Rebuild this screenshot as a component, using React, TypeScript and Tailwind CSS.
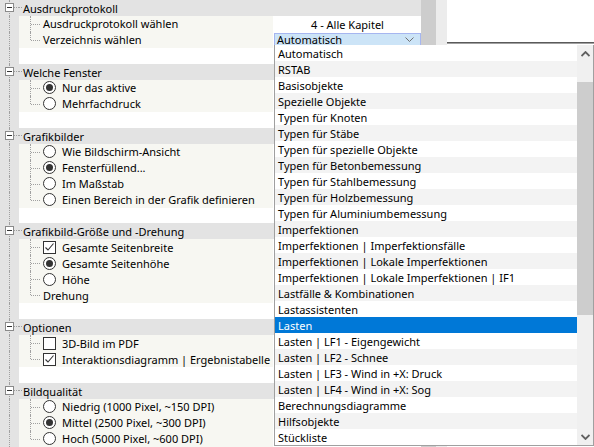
import React from 'react';

type Icon = 'radio-on' | 'radio-off' | 'check-on' | 'check-off';

type Row =
  | { kind: 'header'; label: string }
  | { kind: 'item'; label: string; icon?: Icon; last?: boolean; value?: 'text' | 'combo' }
  | { kind: 'empty' };

const rows: Row[] = [
  { kind: 'header', label: 'Ausdruckprotokoll' },
  { kind: 'item', label: 'Ausdruckprotokoll wählen', value: 'text' },
  { kind: 'item', label: 'Verzeichnis wählen', value: 'combo', last: true },
  { kind: 'empty' },
  { kind: 'header', label: 'Welche Fenster' },
  { kind: 'item', label: 'Nur das aktive', icon: 'radio-on' },
  { kind: 'item', label: 'Mehrfachdruck', icon: 'radio-off', last: true },
  { kind: 'empty' },
  { kind: 'header', label: 'Grafikbilder' },
  { kind: 'item', label: 'Wie Bildschirm-Ansicht', icon: 'radio-off' },
  { kind: 'item', label: 'Fensterfüllend...', icon: 'radio-on' },
  { kind: 'item', label: 'Im Maßstab', icon: 'radio-off' },
  { kind: 'item', label: 'Einen Bereich in der Grafik definieren', icon: 'radio-off', last: true },
  { kind: 'empty' },
  { kind: 'header', label: 'Grafikbild-Größe und -Drehung' },
  { kind: 'item', label: 'Gesamte Seitenbreite', icon: 'check-on' },
  { kind: 'item', label: 'Gesamte Seitenhöhe', icon: 'radio-on' },
  { kind: 'item', label: 'Höhe', icon: 'radio-off' },
  { kind: 'item', label: 'Drehung', last: true },
  { kind: 'empty' },
  { kind: 'header', label: 'Optionen' },
  { kind: 'item', label: '3D-Bild im PDF', icon: 'check-off' },
  { kind: 'item', label: 'Interaktionsdiagramm | Ergebnistabelle', icon: 'check-on', last: true },
  { kind: 'empty' },
  { kind: 'header', label: 'Bildqualität' },
  { kind: 'item', label: 'Niedrig (1000 Pixel, ~150 DPI)', icon: 'radio-off' },
  { kind: 'item', label: 'Mittel (2500 Pixel, ~300 DPI)', icon: 'radio-on' },
  { kind: 'item', label: 'Hoch (5000 Pixel, ~600 DPI)', icon: 'radio-off', last: true },
];

const options = [
  'Automatisch',
  'RSTAB',
  'Basisobjekte',
  'Spezielle Objekte',
  'Typen für Knoten',
  'Typen für Stäbe',
  'Typen für spezielle Objekte',
  'Typen für Betonbemessung',
  'Typen für Stahlbemessung',
  'Typen für Holzbemessung',
  'Typen für Aluminiumbemessung',
  'Imperfektionen',
  'Imperfektionen | Imperfektionsfälle',
  'Imperfektionen | Lokale Imperfektionen',
  'Imperfektionen | Lokale Imperfektionen | IF1',
  'Lastfälle & Kombinationen',
  'Lastassistenten',
  'Lasten',
  'Lasten | LF1 - Eigengewicht',
  'Lasten | LF2 - Schnee',
  'Lasten | LF3 - Wind in +X: Druck',
  'Lasten | LF4 - Wind in +X: Sog',
  'Berechnungsdiagramme',
  'Hilfsobjekte',
  'Stückliste',
];

function StateIcon({ icon }: { icon: Icon }) {
  if (icon === 'radio-on' || icon === 'radio-off') {
    return (
      <span className="flex h-[13px] w-[13px] shrink-0 items-center justify-center rounded-full border border-[#333333] bg-white">
        {icon === 'radio-on' && <span className="h-[7px] w-[7px] rounded-full bg-[#333333]" />}
      </span>
    );
  }
  return (
    <span className="flex h-[13px] w-[13px] shrink-0 items-center justify-center border border-[#333333] bg-white">
      {icon === 'check-on' && (
        <svg width="11" height="11" viewBox="0 0 11 11">
          <path d="M1.5 5.5 L4 8 L9.5 1.5" fill="none" stroke="#333333" strokeWidth="1.1" />
        </svg>
      )}
    </span>
  );
}

function TreeStrip({ header }: { header?: boolean }) {
  return (
    <div className="relative h-full w-[19px] shrink-0 bg-[#e3e3e3]">
      <div className="absolute left-[9px] top-0 h-full border-l border-dotted border-[#a0a0a0]" />
      {header && (
        <>
          <div className="absolute left-[13px] top-[7px] w-[6px] border-t border-dotted border-[#a0a0a0]" />
          <div className="absolute left-[5px] top-[3px] flex h-[9px] w-[9px] items-center justify-center border border-[#8a8a8a] bg-white">
            <div className="h-px w-[5px] bg-[#333333]" />
          </div>
        </>
      )}
    </div>
  );
}

function PropertyRow({ row }: { row: Row }) {
  if (row.kind === 'header') {
    return (
      <div className="flex h-4 bg-[#e3e3e3]">
        <TreeStrip header />
        <div className="relative h-full flex-1">
          <div className="absolute left-0 top-[7px] w-[3px] border-t border-dotted border-[#a0a0a0]" />
          <span className="absolute left-[4px] top-[1px] leading-4">{row.label}</span>
        </div>
      </div>
    );
  }
  if (row.kind === 'empty') {
    return (
      <div className="flex h-4 bg-white">
        <TreeStrip />
      </div>
    );
  }
  return (
    <div className="flex h-4">
      <TreeStrip />
      <div className="relative flex h-full w-[254px] shrink-0 items-center bg-[#f7f7f2]">
        <div
          className={`absolute left-[11px] top-0 border-l border-dotted border-[#a0a0a0] ${
            row.last ? 'h-[8px]' : 'h-full'
          }`}
        />
        <div className="absolute left-[12px] top-[8px] w-[9px] border-t border-dotted border-[#a0a0a0]" />
        <div className="ml-[24px] flex items-center gap-[6px] whitespace-nowrap leading-4">
          {row.icon && <StateIcon icon={row.icon} />}
          <span className="pt-[1px]">{row.label}</span>
        </div>
      </div>
      <div className="relative h-full flex-1 bg-white">
        {row.value === 'text' && (
          <div className="pl-[1px] pt-[1px] text-center leading-4">4 - Alle Kapitel</div>
        )}
        {row.value === 'combo' && (
          <div className="absolute bottom-[3px] left-[1px] right-0 top-[1px] flex items-center justify-between border border-b-0 border-[#a6b6f0] bg-[#cce4f7] pl-[2px] pr-[6px]">
            <span className="pt-[1px] leading-[11px]">Automatisch</span>
            <svg width="9" height="5" viewBox="0 0 9 5">
              <path d="M0.5 0.5 L4.5 4.5 L8.5 0.5" fill="none" stroke="#707070" strokeWidth="1" />
            </svg>
          </div>
        )}
      </div>
    </div>
  );
}

function Chevron({ up }: { up?: boolean }) {
  return (
    <svg width="9" height="6" viewBox="0 0 9 6">
      <path
        d={up ? 'M0.5 5 L4.5 1 L8.5 5' : 'M0.5 1 L4.5 5 L8.5 1'}
        fill="none"
        stroke="#606060"
        strokeWidth="1.8"
      />
    </svg>
  );
}

export default function App() {
  const selected = 'Lasten';
  return (
    <div
      className="relative flex h-[447px] w-[594px] overflow-hidden bg-white text-[11px] text-black"
      style={{ fontFamily: '"Noto Sans", "Open Sans", sans-serif' }}
    >
      <div className="flex w-[421px] shrink-0 flex-col">
        {rows.map((r, i) => (
          <PropertyRow key={i} row={r} />
        ))}
      </div>
      <div className="w-[15px] shrink-0 bg-[#cdcdcd]" />
      <div className="w-[11px] shrink-0 bg-[#ececec]" />
      <div className="flex-1 bg-white">
        <div className="h-[43px] border-b border-[#5a5a5a]" />
        <div className="h-px bg-[#a0a0a0]" />
      </div>

      <div className="absolute left-[274px] top-[45px] flex h-[401px] w-[320px] border-b border-l border-r border-[#a0a0a0] bg-white">
        <div className="w-[302px] shrink-0">
          {options.map((o, i) => (
            <div
              key={o}
              className={`h-4 whitespace-nowrap pl-[3px] pt-[1px] leading-[15px] ${
                o === selected
                  ? 'bg-[#0078d7] text-white'
                  : i % 2 === 1
                  ? 'bg-[#f3f3f3]'
                  : 'bg-white'
              }`}
            >
              {o}
            </div>
          ))}
        </div>
        <div className="flex flex-1 flex-col bg-[#f0f0f0]">
          <div className="flex h-[17px] items-center justify-center">
            <Chevron up />
          </div>
          <div className="h-[20px]" />
          <div className="h-[233px] bg-[#cdcdcd]" />
          <div className="flex-1" />
          <div className="flex h-[17px] items-center justify-center">
            <Chevron />
          </div>
        </div>
      </div>
    </div>
  );
}
